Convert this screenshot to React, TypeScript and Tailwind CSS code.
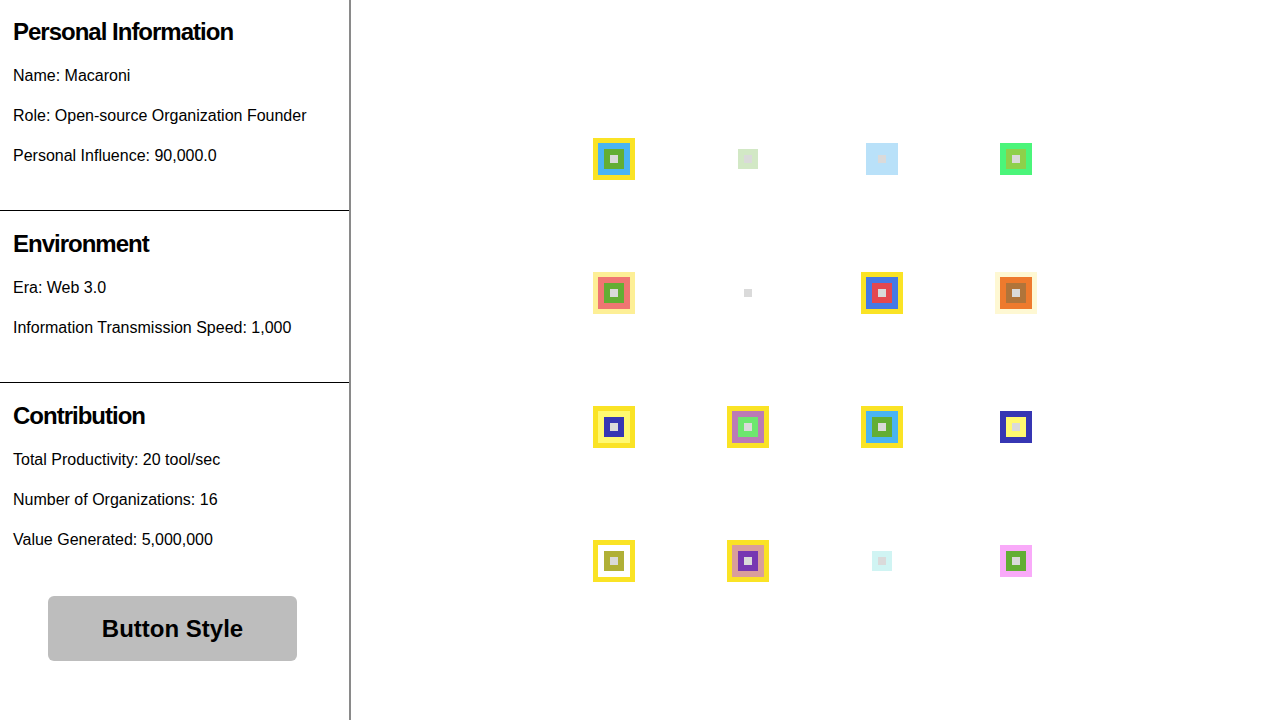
import React from "react";

type Tile = { outer?: string; mid?: string; inner?: string };

// each tile: outer ring (42px), middle (32px), inner (20px), then a grey dot (8px)
const tiles: Tile[] = [
  { outer: "bg-[#fae325]", mid: "bg-[#4ab4f2]", inner: "bg-[#63ae34]" },
  { inner: "bg-[#d2e8c5]" },
  { mid: "bg-[#b9e1f9]" },
  { mid: "bg-[#4bf57a]", inner: "bg-[#8ed04a]" },

  { outer: "bg-[#fdef96]", mid: "bg-[#ef7672]", inner: "bg-[#63ae34]" },
  {},
  { outer: "bg-[#fae325]", mid: "bg-[#4679e5]", inner: "bg-[#e5474f]" },
  { outer: "bg-[#fef8d3]", mid: "bg-[#ee7a2d]", inner: "bg-[#b0743a]" },

  { outer: "bg-[#fae325]", mid: "bg-[#fff970]", inner: "bg-[#3636b3]" },
  { outer: "bg-[#fae325]", mid: "bg-[#bb7bb6]", inner: "bg-[#6de76e]" },
  { outer: "bg-[#fae325]", mid: "bg-[#4ab4f2]", inner: "bg-[#63ae34]" },
  { mid: "bg-[#3636b3]", inner: "bg-[#fff970]" },

  { outer: "bg-[#fae325]", mid: "bg-white", inner: "bg-[#b0b036]" },
  { outer: "bg-[#fae325]", mid: "bg-[#d99e9b]", inner: "bg-[#7737b2]" },
  { inner: "bg-[#d0f4f3]" },
  { mid: "bg-[#f9aaf9]", inner: "bg-[#63ae34]" },
];

const Square: React.FC<{ tile: Tile }> = ({ tile }) => (
  <div className="w-[134px] h-[134px] flex items-center justify-center">
    <div className={`w-[42px] h-[42px] flex items-center justify-center ${tile.outer ?? ""}`}>
      <div className={`w-[32px] h-[32px] flex items-center justify-center ${tile.mid ?? ""}`}>
        <div className={`w-[20px] h-[20px] flex items-center justify-center ${tile.inner ?? ""}`}>
          <div className="w-[8px] h-[8px] bg-[#dadada]" />
        </div>
      </div>
    </div>
  </div>
);

const Section: React.FC<{ title: string; lines: string[]; top: string; last?: boolean; children?: React.ReactNode }> = ({
  title,
  lines,
  top,
  last,
  children,
}) => (
  <section className={`px-[13px] ${top} ${last ? "" : "pb-[42px] border-b border-black"}`}>
    <h2 className="text-[24px] leading-[32px] font-bold tracking-[-1px]">{title}</h2>
    <div className="mt-[16px] flex flex-col gap-[16px]">
      {lines.map((l) => (
        <p key={l} className="text-[16px] leading-[24px]">
          {l}
        </p>
      ))}
    </div>
    {children}
  </section>
);

export default function App() {
  return (
    <div className="flex w-[1280px] h-[720px] bg-white text-black font-['Liberation_Sans',Arial,sans-serif]">
      <aside className="w-[351px] shrink-0 border-r-2 border-[#8a8a8a] flex flex-col">
        <Section
          title="Personal Information"
          top="pt-[16px]"
          lines={["Name: Macaroni", "Role: Open-source Organization Founder", "Personal Influence: 90,000.0"]}
        />
        <Section title="Environment" top="pt-[17px]" lines={["Era: Web 3.0", "Information Transmission Speed: 1,000"]} />
        <Section
          title="Contribution"
          top="pt-[17px]"
          last
          lines={["Total Productivity: 20 tool/sec", "Number of Organizations: 16", "Value Generated: 5,000,000"]}
        >
          <button className="mt-[44px] ml-[35px] w-[249px] h-[65px] rounded-[6px] bg-[#bdbdbd] text-[24px] font-bold">
            Button Style
          </button>
        </Section>
      </aside>
      <main className="flex-1 flex items-center justify-center pr-[1px]">
        <div className="grid grid-cols-4">
          {tiles.map((t, i) => (
            <Square key={i} tile={t} />
          ))}
        </div>
      </main>
    </div>
  );
}
